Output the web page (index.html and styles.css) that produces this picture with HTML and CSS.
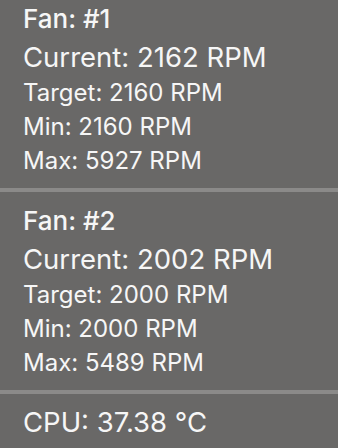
FILE: index.html
```html
<!DOCTYPE html>
<html>
<head>
<meta charset="utf-8">
<link rel="stylesheet" href="styles.css">
</head>
<body>
<div class="menu">
  <section class="group group--first">
    <div class="title">Fan: #1</div>
    <div class="current">Current: 2162 RPM</div>
    <div class="detail">Target: 2160 RPM</div>
    <div class="detail">Min: 2160 RPM</div>
    <div class="detail">Max: 5927 RPM</div>
  </section>
  <hr class="sep">
  <section class="group">
    <div class="title">Fan: #2</div>
    <div class="current">Current: 2002 RPM</div>
    <div class="detail">Target: 2000 RPM</div>
    <div class="detail">Min: 2000 RPM</div>
    <div class="detail">Max: 5489 RPM</div>
  </section>
  <hr class="sep">
  <section class="group group--last">
    <div class="current">CPU: 37.38 °C</div>
  </section>
</div>
</body>
</html>
```
FILE: styles.css
```css
html, body {
  margin: 0;
  padding: 0;
  background: #696867;
}
body {
  width: 338px;
  height: 448px;
  overflow: hidden;
  font-family: Inter, "Noto Sans", sans-serif;
  color: #f6f6f6;
}
.menu {
  display: flex;
  flex-direction: column;
}
.group {
  padding: 10px 0 10px 23px;
}
.group--first {
  padding-top: 0;
}
.group--last {
  padding-top: 9px;
}
.title {
  font-size: 26px;
  line-height: 38px;
  font-weight: 500;
}
.current {
  font-size: 27.5px;
  line-height: 38px;
  font-weight: 400;
}
.detail {
  font-size: 24px;
  line-height: 34px;
  font-weight: 400;
}
.sep {
  margin: 0;
  border: 0;
  height: 4px;
  background: #8b8a89;
}
```
